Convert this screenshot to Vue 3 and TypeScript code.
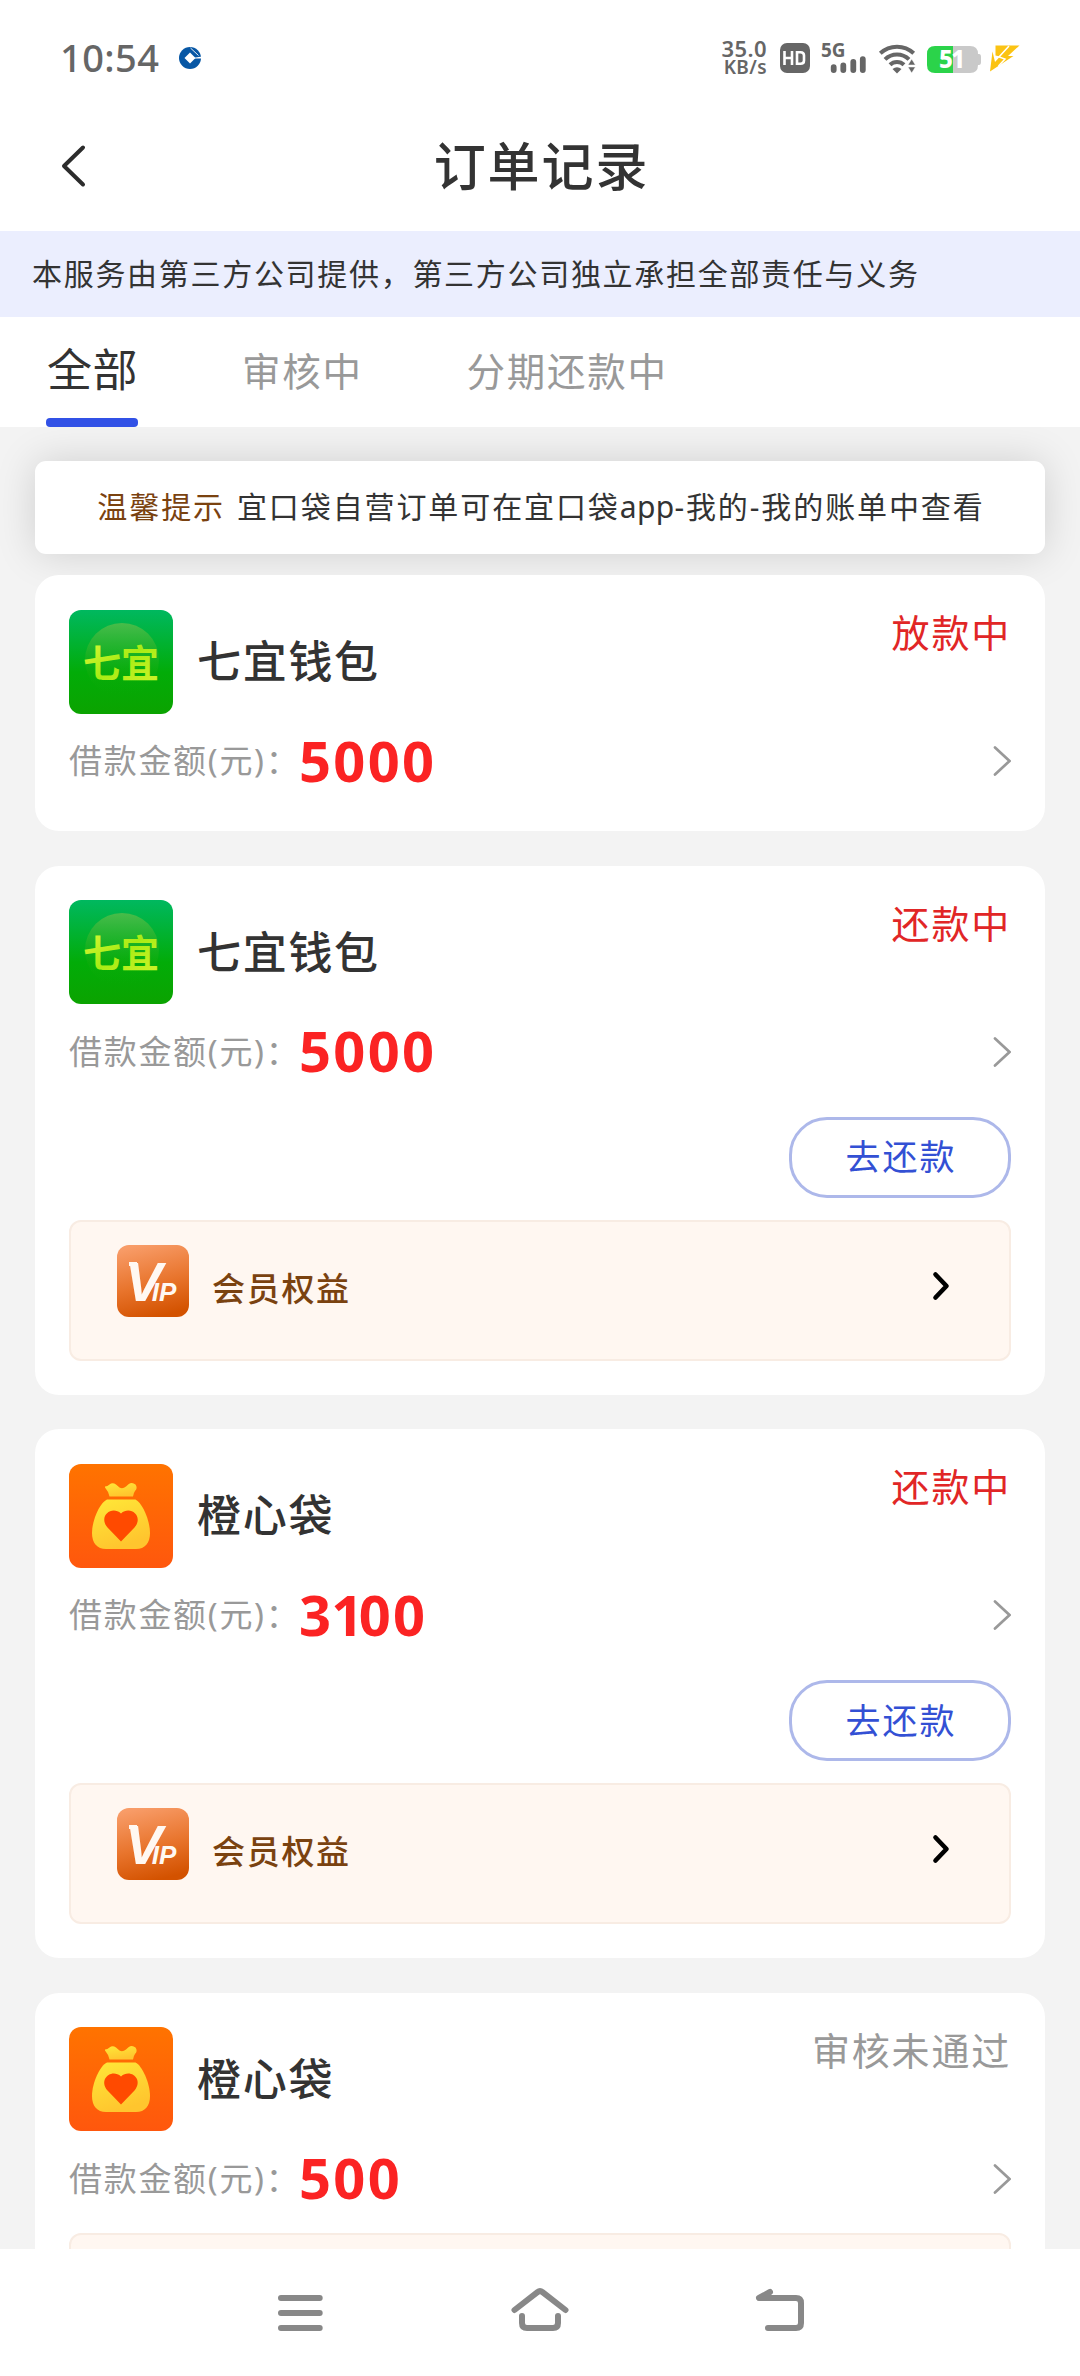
<script setup lang="ts">
import { ref } from 'vue'

interface Order {
  brand: 'qiyi' | 'chengxin'
  name: string
  amount: number
  status: string
  muted?: boolean
  repay?: boolean
  vip?: boolean
}

const tabs: string[] = ['全部', '审核中', '分期还款中']
const activeTab = ref(0)

const orders: Order[] = [
  { brand: 'qiyi', name: '七宜钱包', amount: 5000, status: '放款中' },
  { brand: 'qiyi', name: '七宜钱包', amount: 5000, status: '还款中', repay: true, vip: true },
  { brand: 'chengxin', name: '橙心袋', amount: 3100, status: '还款中', repay: true, vip: true },
  { brand: 'chengxin', name: '橙心袋', amount: 500, status: '审核未通过', muted: true, vip: true },
]
</script>

<template>
  <div class="page">
    <div class="status-bar">
      <span class="time">10:54</span>
      <svg class="bank" width="24" height="24" viewBox="0 0 24 24">
        <circle cx="12" cy="12" r="11" fill="#0757a5" />
        <path d="M12 6.5L17.5 12L12 17.5L6.5 12Z" fill="#fff" />
        <path d="M16 11.7L24 10.5V12.6L16 12.6Z" fill="#fff" />
        <path d="M12.5 2L20.5 9.5" stroke="#fff" stroke-width="0.9" />
      </svg>
      <div class="speed"><span>35.0</span><span class="unit">KB/s</span></div>
      <svg class="indicators" width="300" height="40" viewBox="775 38 300 40">
        <rect x="780" y="43" width="30" height="30" rx="7" fill="#666" />
        <path d="M784.5 51V65M792 51V65M784.5 58H792M797 52.2V63.8H800.5Q804 63.8 804 60.5V55.5Q804 52.2 800.5 52.2Z" fill="none" stroke="#fff" stroke-width="2.6" />
        <text x="821" y="57.3" font-size="19.5" font-weight="700" fill="#666" textLength="24.5" lengthAdjust="spacingAndGlyphs">5G</text>
        <g stroke="#666" stroke-width="5.8" stroke-linecap="round">
          <path d="M833.7 67.2V70M843.3 65.5V70M853.3 62V70M862.8 59.2V70" />
        </g>
        <g fill="none" stroke="#666" stroke-width="4">
          <path d="M880.3 53.3A24.5 24.5 0 0 1 913.7 53.3" />
          <path d="M885 59.4A17 17 0 0 1 909 59.4" />
          <path d="M890 64.8A10 10 0 0 1 904 64.8" />
        </g>
        <path d="M892.5 69Q897 65.5 901.5 69L897 73.5Z" fill="#666" />
        <path d="M911.7 59L915.4 65H908ZM911.7 73L915.4 67H908Z" fill="#666" stroke="#fff" stroke-width="0.5" />
        <path d="M935 46H953V73H935Q927 73 927 65V54Q927 46 935 46Z" fill="#2bd34a" />
        <path d="M953 46H970Q978 46 978 54H979Q981 54 981 57V62Q981 65 979 65H978Q978 73 970 73H953Z" fill="#c9c9c9" />
        <text x="939" y="68.3" font-size="24" font-weight="800" fill="#fff" textLength="26">51</text>
        <path d="M995.5 45.5H1019.5L1008 56H1013.5L990 71.5L992.5 51.5L995 62L1000 56.5L995.5 55.5Z" fill="#fbc313" />
        <path d="M1009 46L999 57L1005 59L998.5 66" fill="none" stroke="#fff" stroke-width="1.5" />
      </svg>
    </div>

    <header class="header">
      <svg class="back" width="30" height="46" viewBox="0 0 30 46">
        <path d="M24 4.5L5 23L24 41.5" fill="none" stroke="#2c2c2c" stroke-width="4" stroke-linecap="round" stroke-linejoin="round" />
      </svg>
      <h1>订单记录</h1>
    </header>

    <div class="notice">本服务由第三方公司提供，第三方公司独立承担全部责任与义务</div>

    <nav class="tabs">
      <div
        v-for="(tab, i) in tabs"
        :key="tab"
        class="tab"
        :class="{ active: i === activeTab }"
        @click="activeTab = i"
      >{{ tab }}</div>
    </nav>

    <main class="content">
      <div class="tip"><span class="tip-label">温馨提示</span><span>宜口袋自营订单可在宜口袋<span class="latin">app</span>-我的-我的账单中查看</span></div>

      <section v-for="(order, i) in orders" :key="i" class="card">
        <div class="card-head">
          <svg v-if="order.brand === 'qiyi'" class="logo" width="104" height="104" viewBox="0 0 104 104">
            <defs>
              <linearGradient id="green" x1="0" y1="0" x2="0" y2="1">
                <stop offset="0" stop-color="#00b85f" />
                <stop offset="0.6" stop-color="#02ac08" />
                <stop offset="1" stop-color="#0ba300" />
              </linearGradient>
              <linearGradient id="glow" x1="0" y1="0" x2="0" y2="1">
                <stop offset="0" stop-color="#55bd4a" stop-opacity="0.85" />
                <stop offset="0.65" stop-color="#1fae12" stop-opacity="0.3" />
                <stop offset="1" stop-color="#06aa04" stop-opacity="0" />
              </linearGradient>
              <linearGradient id="lime" x1="0" y1="0" x2="1" y2="1">
                <stop offset="0" stop-color="#e4f83c" />
                <stop offset="0.5" stop-color="#a8ec14" />
                <stop offset="1" stop-color="#d2f52c" />
              </linearGradient>
            </defs>
            <rect width="104" height="104" rx="12" fill="url(#green)" />
            <circle cx="53" cy="50" r="37" fill="url(#glow)" />
            <text x="14" y="67" font-size="38" font-weight="700" fill="url(#lime)" textLength="76">七宜</text>
          </svg>
          <svg v-else class="logo" width="104" height="104" viewBox="0 0 104 104">
            <defs>
              <linearGradient id="orange" x1="0" y1="0" x2="0" y2="1">
                <stop offset="0" stop-color="#ff7300" />
                <stop offset="1" stop-color="#ff570d" />
              </linearGradient>
              <linearGradient id="gold" x1="0" y1="0" x2="0.4" y2="1">
                <stop offset="0" stop-color="#ffe838" />
                <stop offset="1" stop-color="#ffc52e" />
              </linearGradient>
            </defs>
            <rect width="104" height="104" rx="12" fill="url(#orange)" />
            <path d="M36 22.5Q38.5 22.5 40.5 20.5Q43.5 17.8 47 20.5L50.5 23.5Q53.5 25.5 57 22.5L59.5 20.3Q63 17.5 66.5 20.5Q69 24 66 27Q64.5 29 64 32.5H40.5Q39.5 27.5 36 23.5Z" fill="url(#gold)" />
            <path d="M38 35.5H66.5C73 38.5 81 56 81 69C81 79 76 85 67 85H37C28 85 23 79 23 69C23 56 31 38.5 38 35.5Z" fill="url(#gold)" />
            <path d="M52 77.5L38.5 63.5C29 52.5 42.5 41 52 49.5C61.5 41 75 52.5 65.5 63.5Z" fill="#ff4a00" />
          </svg>
          <span class="name">{{ order.name }}</span>
          <span class="status" :class="{ muted: order.muted }">{{ order.status }}</span>
        </div>

        <div class="amount-row">
          <span class="label">借款金额(元)：</span>
          <span class="amount"><span v-for="(digit, d) in String(order.amount)" :key="d" :class="{ narrow: digit === '1' }">{{ digit }}</span></span>
          <svg class="more" width="20" height="34" viewBox="0 0 20 34">
            <path d="M4 3.5L18.5 17L4 30.5" fill="none" stroke="#999" stroke-width="2.7" stroke-linecap="round" />
          </svg>
        </div>

        <button v-if="order.repay" class="repay">去还款</button>

        <div v-if="order.vip" class="vip">
          <template v-if="order.repay">
            <svg class="vip-icon" width="72" height="72" viewBox="0 0 72 72">
              <defs>
                <linearGradient id="vip" x1="0.3" y1="0" x2="0.55" y2="1">
                  <stop offset="0" stop-color="#f89c68" />
                  <stop offset="0.55" stop-color="#e8742c" />
                  <stop offset="1" stop-color="#d35200" />
                </linearGradient>
              </defs>
              <rect width="72" height="72" rx="12" fill="url(#vip)" />
              <path d="M12 17H20V21H12Z" fill="#fff8f2" />
              <text class="vip-text" x="8" y="55.5" font-size="56">V<tspan font-size="26" dx="-10.5">IP</tspan></text>
            </svg>
            <span class="vip-label">会员权益</span>
            <svg class="vip-more" width="20" height="34" viewBox="0 0 20 34">
              <path d="M4.5 5.5L15.5 17L4.5 28.5" fill="none" stroke="#000" stroke-width="4.6" stroke-linecap="round" stroke-linejoin="round" />
            </svg>
          </template>
        </div>
      </section>
    </main>

    <footer class="nav">
      <svg width="60" height="60" viewBox="0 0 60 60">
        <path d="M11 15H49.7M11 30H49.7M11 45H49.7" />
      </svg>
      <svg width="60" height="60" viewBox="0 0 60 60">
        <path d="M4.5 27L27.5 9.2Q30 7.2 32.5 9.2L55.5 27M12 33V40Q12 45 17 45H43Q48 45 48 40V33" />
      </svg>
      <svg width="60" height="60" viewBox="0 0 60 60">
        <path d="M20 9L9 15H46Q51 15 51 20V40Q51 45 46 45H18" />
      </svg>
    </footer>
  </div>
</template>

<style>
body {
  margin: 0;
  overflow: hidden;
}
</style>

<style scoped>
.page {
  width: 1080px;
  height: 2376px;
  display: flex;
  flex-direction: column;
  overflow: hidden;
  background: #fff;
  color: #333;
  font-family: 'Noto Sans', 'Noto Sans CJK SC', sans-serif;
}

.status-bar {
  height: 104px;
  flex: none;
  box-sizing: border-box;
  padding: 12px 0 0 60px;
  display: flex;
  align-items: center;
  color: #666;
}

.status-bar > * {
  flex: none;
}

.time {
  width: 118px;
  margin-top: -3px;
  font-size: 38px;
  font-weight: 500;
  letter-spacing: 0.4px;
}

.speed {
  width: 64px;
  margin-left: 501px;
  display: flex;
  flex-direction: column;
  align-items: flex-end;
  font-size: 22px;
  font-weight: 600;
  letter-spacing: 0.4px;
  line-height: 19px;
}

.speed .unit {
  font-size: 19px;
}

.indicators {
  margin-left: 8px;
}

.header {
  height: 127px;
  flex: none;
  display: flex;
  align-items: center;
  padding: 0 59px;
}

.back {
  margin-top: -3px;
}

h1 {
  flex: 1;
  margin: -3px 27px 0 0;
  text-align: center;
  font-size: 52px;
  font-weight: 500;
  letter-spacing: 1.9px;
  line-height: 60px;
}

.notice {
  height: 86px;
  flex: none;
  padding-left: 32px;
  background: #ebeefe;
  font-size: 30px;
  letter-spacing: 1.7px;
  line-height: 86px;
}

.tabs {
  height: 110px;
  flex: none;
  display: flex;
  gap: 104px;
  padding-left: 46px;
}

.tab {
  box-sizing: border-box;
  height: 110px;
  color: #999;
  font-size: 38.5px;
  letter-spacing: 1.7px;
  line-height: 109px;
}

.tab.active {
  width: 92px;
  padding-left: 1px;
  color: #333;
  font-size: 45px;
  letter-spacing: 0.5px;
  line-height: 106px;
  display: flex;
  flex-direction: column;
}

.tab.active::after {
  content: '';
  width: 92px;
  height: 9px;
  margin: -5px 0 0 -1px;
  border-radius: 4px;
  background: #3151e6;
}

.content {
  flex: 1;
  min-height: 0;
  overflow: hidden;
  box-sizing: border-box;
  padding: 34px 35px 0;
  background: #f3f3f3;
}

.tip {
  height: 93px;
  box-sizing: border-box;
  margin-bottom: 21px;
  padding: 0 0 2px 2px;
  display: flex;
  align-items: center;
  justify-content: center;
  gap: 12px;
  border-radius: 11px;
  background: #fff;
  box-shadow: 0 0 40px rgba(0, 0, 0, 0.15);
  font-size: 30px;
  letter-spacing: 1.9px;
  line-height: 90px;
  white-space: nowrap;
}

.tip-label {
  color: #7a4210;
}

.latin {
  letter-spacing: 0.3px;
}

.card {
  position: relative;
  box-sizing: border-box;
  padding: 35px 34px 34px;
  margin-bottom: 34.5px;
  border-radius: 24px;
  background: #fff;
  display: flex;
  flex-direction: column;
}

.card-head {
  height: 103px;
  display: flex;
  align-items: center;
}

.logo {
  flex: none;
}

.name {
  flex: 1;
  margin: -1px 0 0 24px;
  font-size: 44px;
  font-weight: 500;
  letter-spacing: 1.7px;
  line-height: 60px;
}

.status {
  align-self: flex-start;
  color: #e12626;
  font-size: 38px;
  letter-spacing: 1.8px;
  line-height: 44px;
}

.status.muted {
  color: #999;
}

.amount-row {
  height: 60px;
  margin: 18px 0 6px;
  display: flex;
  align-items: center;
}

.label {
  width: 230px;
  color: #999;
  font-size: 33px;
  letter-spacing: 1.7px;
  line-height: 60px;
  white-space: nowrap;
}

.amount {
  flex: 1;
  margin-top: -3px;
  color: #fb2323;
  font-size: 56px;
  font-weight: 700;
  letter-spacing: 2.3px;
  line-height: 60px;
}

.amount .narrow {
  margin: 0 -7px 0 -2px;
}

.repay {
  width: 222px;
  height: 81px;
  margin: 29px 0 4px;
  padding: 0 0 0 2px;
  align-self: flex-end;
  border: 3px solid #adb8ea;
  border-radius: 38px;
  background: #fff;
  color: #3350d4;
  font-family: inherit;
  font-size: 35px;
  letter-spacing: 2px;
  line-height: 70px;
}

.vip {
  box-sizing: border-box;
  height: 141px;
  margin-top: 18px;
  padding: 23px 58px 0 46px;
  display: flex;
  align-items: flex-start;
  border: 2px solid #f8ece3;
  border-radius: 12px;
  background: #fff7f1;
}

.vip-text {
  fill: #fff8f2;
  font-family: 'Liberation Sans', sans-serif;
  font-weight: 700;
  font-style: italic;
}

.vip-label {
  flex: 1;
  margin: 22px 0 0 23px;
  color: #7a4210;
  font-size: 33px;
  font-weight: 500;
  letter-spacing: 1.7px;
  line-height: 44px;
}

.vip-more {
  margin-top: 24px;
}

.nav {
  height: 127px;
  flex: none;
  box-sizing: border-box;
  padding: 34px 270px 0;
  display: flex;
  justify-content: space-between;
  background: #fff;
}

.nav svg {
  fill: none;
  stroke: #888;
  stroke-width: 6;
  stroke-linecap: round;
  stroke-linejoin: round;
}
</style>
